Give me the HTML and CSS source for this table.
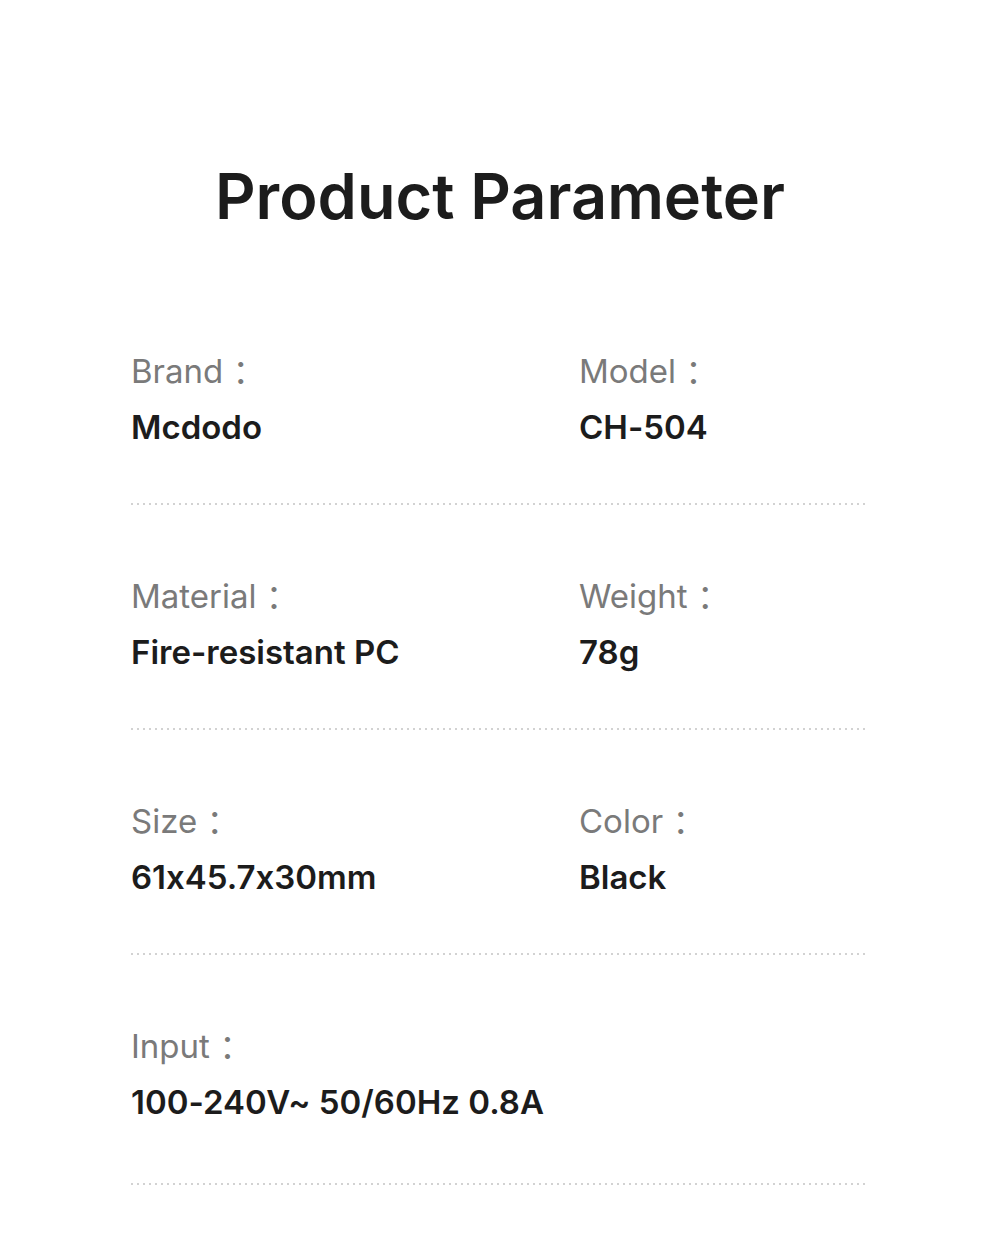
FILE: index.html
```html
<!DOCTYPE html>
<html lang="en">
<head>
<meta charset="utf-8">
<link rel="stylesheet" href="styles.css">
</head>
<body>
<main class="page">
  <h1 class="title">Product Parameter</h1>
  <section class="params">
    <div class="row">
      <div class="cell"><div class="label">Brand ：</div><div class="value">Mcdodo</div></div>
      <div class="cell"><div class="label">Model ：</div><div class="value">CH-504</div></div>
    </div>
    <div class="row">
      <div class="cell"><div class="label">Material ：</div><div class="value">Fire-resistant PC</div></div>
      <div class="cell"><div class="label">Weight ：</div><div class="value">78g</div></div>
    </div>
    <div class="row">
      <div class="cell"><div class="label">Size ：</div><div class="value">61x45.7x30mm</div></div>
      <div class="cell"><div class="label">Color ：</div><div class="value">Black</div></div>
    </div>
    <div class="row last">
      <div class="cell wide"><div class="label">Input ：</div><div class="value">100-240V~ 50/60Hz 0.8A</div></div>
    </div>
  </section>
</main>
</body>
</html>
```

FILE: styles.css
```css
html, body {
  margin: 0;
  padding: 0;
  background: #ffffff;
}
.page {
  width: 1000px;
  height: 1247px;
  box-sizing: border-box;
  padding-top: 154px;
  font-family: Inter, "Noto Sans CJK SC", sans-serif;
  font-feature-settings: "calt" 0;
}
.title {
  margin: 0;
  text-align: center;
  font-size: 63px;
  font-weight: 600;
  line-height: 84px;
  color: #1c1c1c;
}
.params {
  margin: 113px 134px 0 131px;
}
.row {
  display: grid;
  grid-template-columns: 448px 1fr;
  height: 154px;
  margin-bottom: 71px;
  background-image: linear-gradient(to right, #d2d2d2 2px, transparent 2px);
  background-size: 6px 2px;
  background-repeat: repeat-x;
  background-position: left bottom;
}
.row.last {
  height: 159px;
}
.cell.wide {
  grid-column: 1 / 3;
}
.label {
  font-size: 33px;
  line-height: 40px;
  color: #7a7a7a;
  font-weight: 400;
}
.value {
  margin-top: 16px;
  font-size: 33px;
  line-height: 40px;
  color: #1c1c1c;
  font-weight: 600;
}
```
